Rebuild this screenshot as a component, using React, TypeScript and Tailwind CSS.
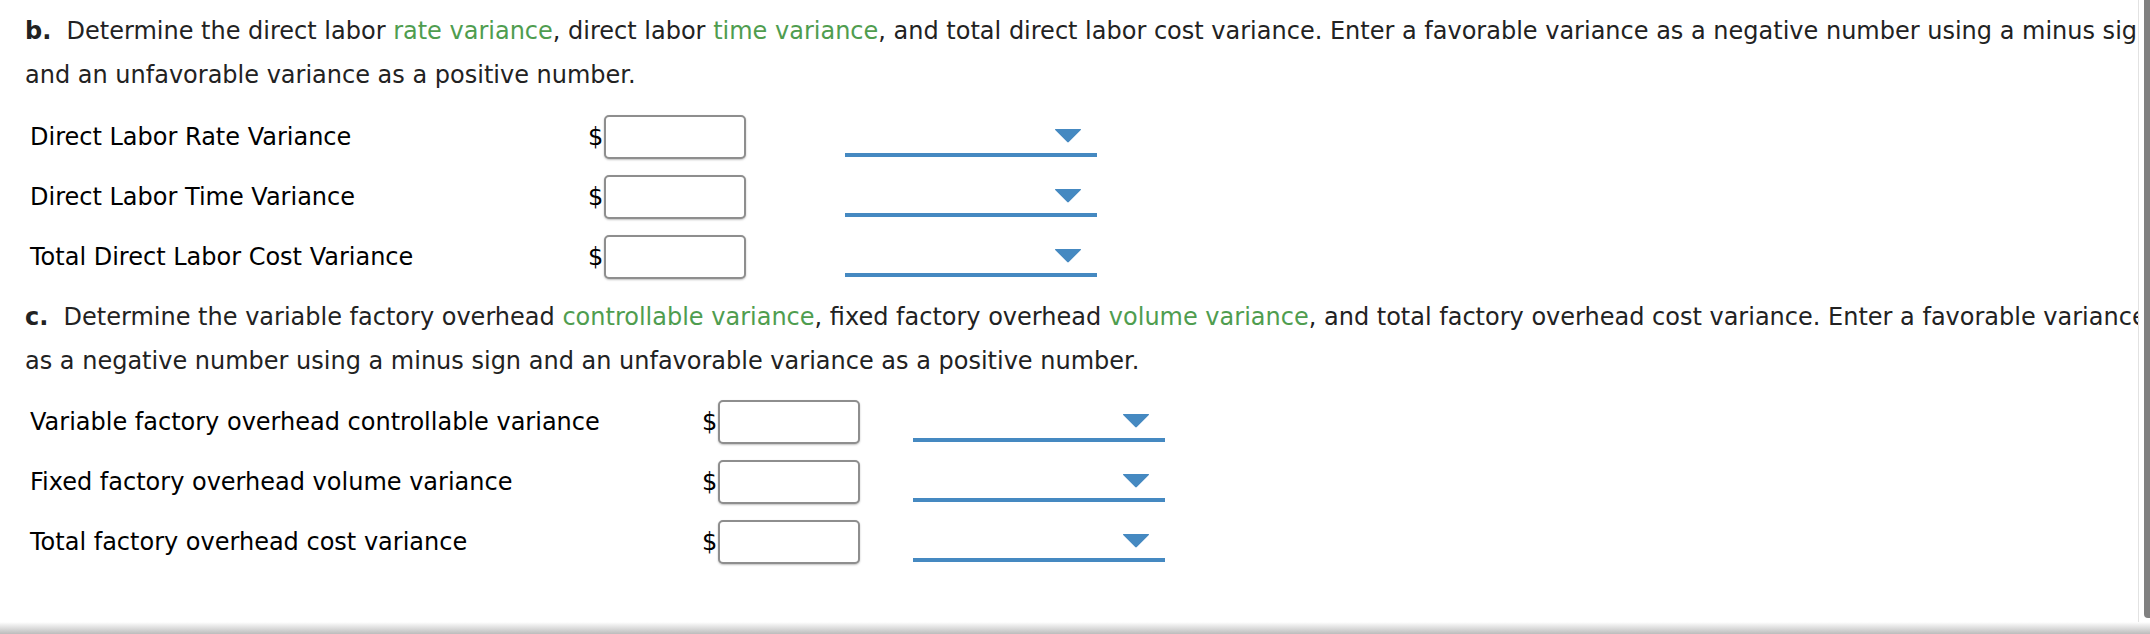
import React from "react"

const Arrow = () => (
    <svg width="28" height="15" viewBox="0 0 28 15" className="block">
        <path d="M1.5 1 L26.5 1 Q27.5 1 26.8 2 L14.8 14 Q14 14.8 13.2 14 L1.2 2 Q0.5 1 1.5 1 Z" fill="#4589c1" />
    </svg>
)

type RowProps = {
    label: string
    labelClass: string
    gapClass: string
}

const AmountRow = ({ label, labelClass, gapClass }: RowProps) => {
    return (
        <div className="flex items-center h-[60px]">
            <div className={`${labelClass} text-black`}>{label}</div>
            <span className="text-black">$</span>
            <input
                type="text"
                className="ml-[1px] w-[142px] h-[44px] bg-white border-2 border-[#8e8e8e] rounded-[5px] shadow-[0_1px_2px_rgba(0,0,0,0.25)] outline-none"
            />
            <div className={`${gapClass} w-[252px] h-[40px] border-b-4 border-[#4589c1] flex items-center justify-end pr-[15px]`}>
                <Arrow />
            </div>
        </div>
    )
}

const Green = ({ children }: { children: React.ReactNode }) => (
    <span className="text-[#4f9d4f]">{children}</span>
)

const App = () => {
    return (
        <div className="w-[2150px] h-[634px] flex flex-col bg-white overflow-hidden font-['DejaVu_Sans',sans-serif] text-[24px] text-[#222]">
            <div className="flex flex-1 min-h-0">
                <div className="flex-1 min-w-0 overflow-hidden pl-[25px] pt-[9px]">
                    {/* part b */}
                    <p className="whitespace-nowrap leading-[44px]">
                        <b>b.</b>&nbsp; Determine the direct labor <Green>rate variance</Green>, direct labor{" "}
                        <Green>time variance</Green>, and total direct labor cost variance. Enter a favorable variance as a
                        negative number using a minus sign
                        <br />
                        and an unfavorable variance as a positive number.
                    </p>
                    <div className="mt-[10px] pl-[5px]">
                        <AmountRow label="Direct Labor Rate Variance" labelClass="w-[558px]" gapClass="ml-[99px]" />
                        <AmountRow label="Direct Labor Time Variance" labelClass="w-[558px]" gapClass="ml-[99px]" />
                        <AmountRow label="Total Direct Labor Cost Variance" labelClass="w-[558px]" gapClass="ml-[99px]" />
                    </div>

                    {/* part c */}
                    <p className="mt-[8px] whitespace-nowrap leading-[44px]">
                        <b>c.</b>&nbsp; Determine the variable factory overhead <Green>controllable variance</Green>, fixed factory
                        overhead <Green>volume variance</Green>, and total factory overhead cost variance. Enter a favorable variance
                        <br />
                        as a negative number using a minus sign and an unfavorable variance as a positive number.
                    </p>
                    <div className="mt-[9px] pl-[5px]">
                        <AmountRow label="Variable factory overhead controllable variance" labelClass="w-[672px]" gapClass="ml-[53px]" />
                        <AmountRow label="Fixed factory overhead volume variance" labelClass="w-[672px]" gapClass="ml-[53px]" />
                        <AmountRow label="Total factory overhead cost variance" labelClass="w-[672px]" gapClass="ml-[53px]" />
                    </div>
                </div>
                <div className="w-[12px] border-l border-[#e2e2e2] flex justify-end">
                    <div className="w-[6px] h-[calc(100%-4px)] bg-[#808080] rounded-bl-[4px]" />
                </div>
            </div>
            <div className="h-[12px] bg-linear-to-b from-white to-[#bcbcbc]" />
        </div>
    )
}

export default App
